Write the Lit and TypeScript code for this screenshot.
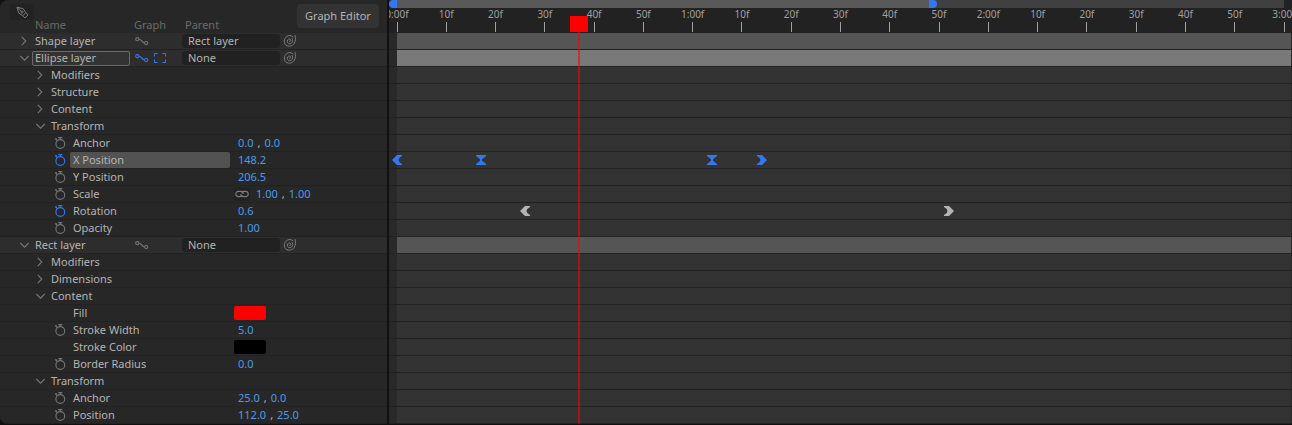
import { LitElement, html, css, svg, nothing } from "lit";
import { customElement } from "lit/decorators.js";
import { classMap } from "lit/directives/class-map.js";
import { styleMap } from "lit/directives/style-map.js";

interface Row {
  name: string;
  level: number;
  open?: boolean;
  layer?: boolean;
  parent?: string;
  selected?: boolean;
  watch?: "off" | "on";
  values?: string[];
  linked?: boolean;
  color?: string;
  keys?: { frame: number; kind: "first" | "mid" | "last" }[];
}

const TOTAL_FRAMES = 180;
const pct = (frame: number) => `${(frame / TOTAL_FRAMES) * 100}%`;

const rows: Row[] = [
  { name: "Shape layer", level: 0, layer: true, open: false, parent: "Rect layer" },
  { name: "Ellipse layer", level: 0, layer: true, open: true, parent: "None", selected: true },
  { name: "Modifiers", level: 1, open: false },
  { name: "Structure", level: 1, open: false },
  { name: "Content", level: 1, open: false },
  { name: "Transform", level: 1, open: true },
  { name: "Anchor", level: 2, watch: "off", values: ["0.0", "0.0"] },
  {
    name: "X Position", level: 2, watch: "on", values: ["148.2"], selected: true,
    keys: [
      { frame: 0, kind: "first" },
      { frame: 17, kind: "mid" },
      { frame: 64, kind: "mid" },
      { frame: 74, kind: "last" },
    ],
  },
  { name: "Y Position", level: 2, watch: "off", values: ["206.5"] },
  { name: "Scale", level: 2, watch: "off", values: ["1.00", "1.00"], linked: true },
  {
    name: "Rotation", level: 2, watch: "on", values: ["0.6"],
    keys: [
      { frame: 26, kind: "first" },
      { frame: 112, kind: "last" },
    ],
  },
  { name: "Opacity", level: 2, watch: "off", values: ["1.00"] },
  { name: "Rect layer", level: 0, layer: true, open: true, parent: "None" },
  { name: "Modifiers", level: 1, open: false },
  { name: "Dimensions", level: 1, open: false },
  { name: "Content", level: 1, open: true },
  { name: "Fill", level: 2, color: "#ff0000" },
  { name: "Stroke Width", level: 2, watch: "off", values: ["5.0"] },
  { name: "Stroke Color", level: 2, color: "#000000" },
  { name: "Border Radius", level: 2, watch: "off", values: ["0.0"] },
  { name: "Transform", level: 1, open: true },
  { name: "Anchor", level: 2, watch: "off", values: ["25.0", "0.0"] },
  { name: "Position", level: 2, watch: "off", values: ["112.0", "25.0"] },
];

const base = css`
  :host {
    display: block;
    font-family: "Noto Sans", "Open Sans", sans-serif;
    font-size: 11px;
    line-height: 16px;
    color: #b4b4b4;
  }
  * {
    box-sizing: border-box;
  }
  button,
  input,
  select {
    font: inherit;
    color: inherit;
    margin: 0;
    padding: 0;
    border: 0;
    background: none;
    appearance: none;
    outline: none;
  }
  svg {
    display: block;
    fill: none;
  }
`;

const chevron = (open: boolean) => html`<svg width="10" height="10" viewBox="0 0 10 10" stroke="#787878" stroke-width="1.1">
  ${open ? svg`<path d="M1.300 3l4.200 4.200L9.700 3" />` : svg`<path d="M2.800 .800L6.800 5L2.800 9.200" />`}
</svg>`;

const graphIcon = html`<svg width="14" height="10" viewBox="0 0 14 10" stroke="currentColor" stroke-width="1.100">
  <circle cx="2.300" cy="3.200" r="1.600" />
  <circle cx="11.200" cy="7.100" r="1.600" />
  <path d="M3.900 3.200C6.500 2.800 6.700 7 9.600 7" />
</svg>`;

const frameIcon = html`<svg width="14" height="10" viewBox="0 0 14 10" stroke="currentColor" stroke-width="1">
  <path d="M1.500 3.500v-3h3M9.500 .500h3v3M12.500 6.500v3h-3M4.500 9.500h-3v-3" />
</svg>`;

const spiralIcon = html`<svg width="14" height="14" viewBox="0 0 14 14" stroke="#7c7c7c" stroke-width="1">
  <path d="M10.300 3.200C8.500 1.200 5.500 1 3.500 2.700C.800 5 .500 9 3 11.200C5.500 13 9.500 12.200 11.200 9.500C12.600 7.200 12.800 4.200 12 1.200" />
  <path d="M6.300 6.700C6.200 7.700 7.800 7.600 7.900 6.600C8 5 5.700 4.500 4.700 5.900C3.500 7.600 4.900 9.900 7 9.700C9.600 9.400 10.500 6 8.800 4.200" />
</svg>`;

const watchIcon = html`<svg width="12" height="12" viewBox="0 0 12 12" stroke="currentColor" stroke-width="1.100">
  <circle cx="6.300" cy="7" r="4.400" />
  <path d="M4.300 .600h4M6.300 .600v2M1 1.900h1.900M1.700 1.900l1.700 1.900" />
</svg>`;

const linkIcon = html`<svg width="14" height="8" viewBox="0 0 14 8" stroke="#7c7c7c" stroke-width="1.100">
  <path d="M7.500 5.500C7 6.400 6.200 6.600 5 6.600H3.600C1.700 6.600 .800 5.500 .800 4C.800 2.500 1.700 1.400 3.600 1.400H5.500C7.300 1.400 8.200 2.600 8.200 4" />
  <path d="M6.500 2.500C7 1.600 7.800 1.400 9 1.400h1.400C12.300 1.400 13.200 2.500 13.200 4C13.200 5.500 12.300 6.600 10.400 6.600H8.500C6.700 6.600 5.800 5.400 5.800 4" />
</svg>`;

const penIcon = html`<svg width="13" height="13" viewBox="0 0 13 13" stroke="#7c7c7c" stroke-width="1">
  <path d="M1 1.200L7.300 2.800L9.800 6.700L6.800 9.700L2.800 7.200Z" />
  <path d="M1 1.200L5.200 5.400" />
  <circle cx="6" cy="6.100" r="1" />
  <path d="M10.100 7L12 8.900L8.900 12L7 10.100" />
</svg>`;

const keyPaths = {
  first: "M0 5L5 0H10V1L7.300 3Q5.800 5 7.300 7L10 9V10H5Z",
  mid: "M0 0H10V1L6 4.300V5.700L10 9V10H0V9L4 5.700V4.300L0 1Z",
  last: "M10 5L5 0H0V1L2.700 3Q4.200 5 2.700 7L0 9V10H5Z",
};

@customElement("layer-row")
export class LayerRow extends LitElement {
  static properties = { row: { attribute: false } };
  declare row: Row;

  static styles = [
    base,
    css`
      .row {
        display: grid;
        grid-template-columns: 230px 1fr;
        height: 17px;
        border-bottom: 1px solid #222222;
        background: #272727;
      }
      .row.layer {
        grid-template-columns: 132px 50px 1fr;
        background: #2d2d2d;
      }
      .label {
        display: flex;
        align-items: center;
        padding-left: 19px;
      }
      .level1 {
        padding-left: 35px;
      }
      .level2 {
        padding-left: 54px;
      }
      .toggle {
        width: 10px;
        height: 10px;
        margin-right: 3px;
      }
      .level1 .toggle {
        margin-right: 4px;
      }
      .watch {
        width: 12px;
        height: 12px;
        margin-right: 4px;
        color: #757575;
      }
      .on {
        color: #3577f1;
      }
      .name {
        flex: 1;
        height: 16px;
        padding-left: 3px;
        line-height: 16px;
        border-radius: 2px;
      }
      .level1 .name {
        padding-left: 2px;
      }
      .picked {
        background: #525252;
      }
      .edit {
        flex: 1;
        min-width: 0;
        height: 15px;
        margin-right: 2px;
        padding-left: 2px;
        border: 1px solid #6a6a6a;
        border-radius: 2px;
        background: #333333;
      }
      .icons {
        display: flex;
        align-items: center;
        gap: 4px;
        padding-left: 3px;
        color: #757575;
      }
      .icons.on {
        color: #3577f1;
      }
      .icons button {
        width: 14px;
        height: 10px;
      }
      .parent {
        display: flex;
        align-items: center;
        gap: 3px;
      }
      .parent select {
        width: 98px;
        height: 14px;
        padding-left: 6px;
        line-height: 14px;
        border-radius: 3px;
        background: #212121;
      }
      .values {
        display: flex;
        align-items: center;
        padding-left: 8px;
        color: #4b9be8;
      }
      .values i {
        font-style: normal;
        color: #b4b4b4;
        margin: 0 4px;
      }
      .values.linked {
        padding-left: 4px;
      }
      .link {
        display: flex;
        align-items: center;
        justify-content: center;
        width: 16px;
        height: 14px;
        margin-right: 6px;
        border-radius: 2px;
        background: #222222;
      }
      .swatch {
        width: 32px;
        height: 14px;
        margin-left: 4px;
        border-radius: 2px;
        align-self: center;
      }
    `,
  ];

  render() {
    const r = this.row;
    const label = html`<div class="label level${r.level}">
      ${r.open !== undefined
        ? html`<button class="toggle" aria-label="Toggle ${r.name}" aria-expanded=${r.open}>${chevron(r.open)}</button>`
        : nothing}
      ${r.level === 2
        ? html`${r.watch
            ? html`<button class=${classMap({ watch: true, on: r.watch === "on" })} aria-label="Animate ${r.name}">${watchIcon}</button>`
            : html`<span class="watch"></span>`}`
        : nothing}
      ${r.layer && r.selected
        ? html`<input class="edit" aria-label="Layer name" .value=${r.name} />`
        : html`<span class=${classMap({ name: true, picked: !!r.selected })}>${r.name}</span>`}
    </div>`;

    if (r.layer) {
      return html`<div class="row layer">
        ${label}
        <div class=${classMap({ icons: true, on: !!r.selected })}>
          <button aria-label="Graph of ${r.name}">${graphIcon}</button>
          ${r.selected ? html`<button aria-label="Frame ${r.name}">${frameIcon}</button>` : nothing}
        </div>
        <div class="parent">
          <select aria-label="Parent of ${r.name}"><option>${r.parent}</option></select>
          <button aria-label="Pick parent of ${r.name}">${spiralIcon}</button>
        </div>
      </div>`;
    }
    return html`<div class="row">
      ${label}
      ${r.color
        ? html`<button class="swatch" aria-label="${r.name} colour" style=${styleMap({ background: r.color })}></button>`
        : html`<div class=${classMap({ values: true, linked: !!r.linked })}>
            ${r.linked ? html`<button class="link" aria-label="Link values">${linkIcon}</button>` : nothing}
            ${(r.values ?? []).map((v, i) => html`${i ? html`<i>,</i>` : nothing}<button>${v}</button>`)}
          </div>`}
    </div>`;
  }
}

@customElement("time-line")
export class TimeLine extends LitElement {
  static styles = [
    base,
    css`
      :host {
        position: relative;
        overflow: hidden;
        background: #222222;
      }
      .range {
        height: 8px;
        padding: 0 8px;
      }
      .full {
        position: relative;
        height: 8px;
        background: #404040;
      }
      .area {
        height: 8px;
        background: #595959;
      }
      .handle {
        position: absolute;
        top: 0;
        width: 8px;
        height: 8px;
        background: #3577f1;
      }
      .start {
        left: -8px;
        border-radius: 4px 0 0 4px;
      }
      .end {
        border-radius: 0 4px 4px 0;
      }
      .ruler {
        position: relative;
        height: 25px;
        margin: 0 8px;
      }
      .tick {
        position: absolute;
        top: 0;
        display: flex;
        flex-direction: column;
        align-items: center;
        width: 60px;
        height: 25px;
        margin-left: -30px;
        line-height: 13px;
        font-size: 10px;
        color: #a0a0a0;
      }
      .tick::after {
        content: "";
        width: 1px;
        height: 10px;
        margin-top: 1px;
        background: #a0a0a0;
      }
      .track {
        height: 17px;
        padding: 0 1px 0 8px;
        border-bottom: 1px solid #222222;
        background: #292929;
      }
      .fill {
        height: 16px;
        padding-right: 7px;
        background: #333333;
      }
      .bar {
        background: #555555;
      }
      .bar.selected {
        background: #797979;
      }
      .keys {
        position: relative;
      }
      .key {
        position: absolute;
        top: 3px;
        width: 10px;
        height: 10px;
        margin-left: -5px;
        color: #b4b4b4;
      }
      .key.selected {
        color: #3577f1;
      }
      .key path {
        fill: currentColor;
      }
      .overlay {
        position: absolute;
        inset: 16px 8px 0;
        pointer-events: none;
      }
      .playhead {
        position: absolute;
        top: 0;
        bottom: 0;
        width: 2px;
        margin-left: -1px;
        background: #ff000090;
      }
      .playhead::before {
        content: "";
        position: absolute;
        left: -8px;
        top: 0;
        width: 18px;
        height: 16px;
        background: #ff0000;
      }
    `,
  ];

  render() {
    const ticks = Array.from({ length: 19 }, (_, i) => i * 10);
    const text = (f: number) => (f % 60 ? `${f % 60}f` : `${f / 60}:00f`);
    return html`
      <div class="range">
        <div class="full">
          <div class="area" style=${styleMap({ width: pct(109) })}></div>
          <span class="handle start"></span>
          <span class="handle end" style=${styleMap({ left: pct(108) })}></span>
        </div>
      </div>
      <div class="ruler">
        ${ticks.map((f) => html`<div class="tick" style=${styleMap({ left: pct(f) })}>${text(f)}</div>`)}
      </div>
      ${rows.map(
        (r) => html`<div class="track">
          <div class=${classMap({ fill: true, bar: !!r.layer, selected: !!r.selected })}>
            <div class="keys">
              ${(r.keys ?? []).map(
                (k) => html`<button
                  class=${classMap({ key: true, selected: !!r.selected })}
                  aria-label="${r.name} keyframe ${k.frame}"
                  style=${styleMap({ left: pct(k.frame) })}
                >
                  <svg width="10" height="10" viewBox="0 0 10 10"><path d=${keyPaths[k.kind]} /></svg>
                </button>`
              )}
            </div>
          </div>
        </div>`
      )}
      <div class="overlay"><div class="playhead" style=${styleMap({ left: pct(37) })}></div></div>
    `;
  }
}

// A selected property row highlights its keyframes; only a selected layer lights up its bar.
@customElement("app-root")
export class AppRoot extends LitElement {
  static styles = [
    base,
    css`
      :host {
        background: #111111;
      }
      .app {
        display: grid;
        grid-template-columns: 387px 1fr;
        gap: 2px;
        padding-bottom: 1px;
      }
      .panel {
        border-radius: 8px 0 0 8px;
        overflow: hidden;
        background: #272727;
      }
      .head {
        display: flex;
        height: 33px;
        align-items: flex-end;
        color: #6b6b6b;
      }
      .pen {
        display: flex;
        align-items: center;
        justify-content: center;
        align-self: flex-start;
        width: 24px;
        height: 16px;
        margin: 4px 0 0 10px;
        border-radius: 3px;
        background: #222222;
      }
      .col {
        width: 51px;
      }
      .col.name {
        width: 99px;
        margin-left: 1px;
      }
      .editor {
        align-self: flex-start;
        width: 82px;
        height: 24px;
        margin: 4px 8px 0 auto;
        border-radius: 4px;
        color: #b4b4b4;
        background: #333333;
      }
    `,
  ];

  render() {
    return html`<div class="app">
      <section class="panel">
        <div class="head">
          <button class="pen" aria-label="Pen tool">${penIcon}</button>
          <span class="col name">Name</span>
          <span class="col">Graph</span>
          <span class="col">Parent</span>
          <button class="editor">Graph Editor</button>
        </div>
        ${rows.map((r) => html`<layer-row .row=${r}></layer-row>`)}
      </section>
      <time-line></time-line>
    </div>`;
  }
}
